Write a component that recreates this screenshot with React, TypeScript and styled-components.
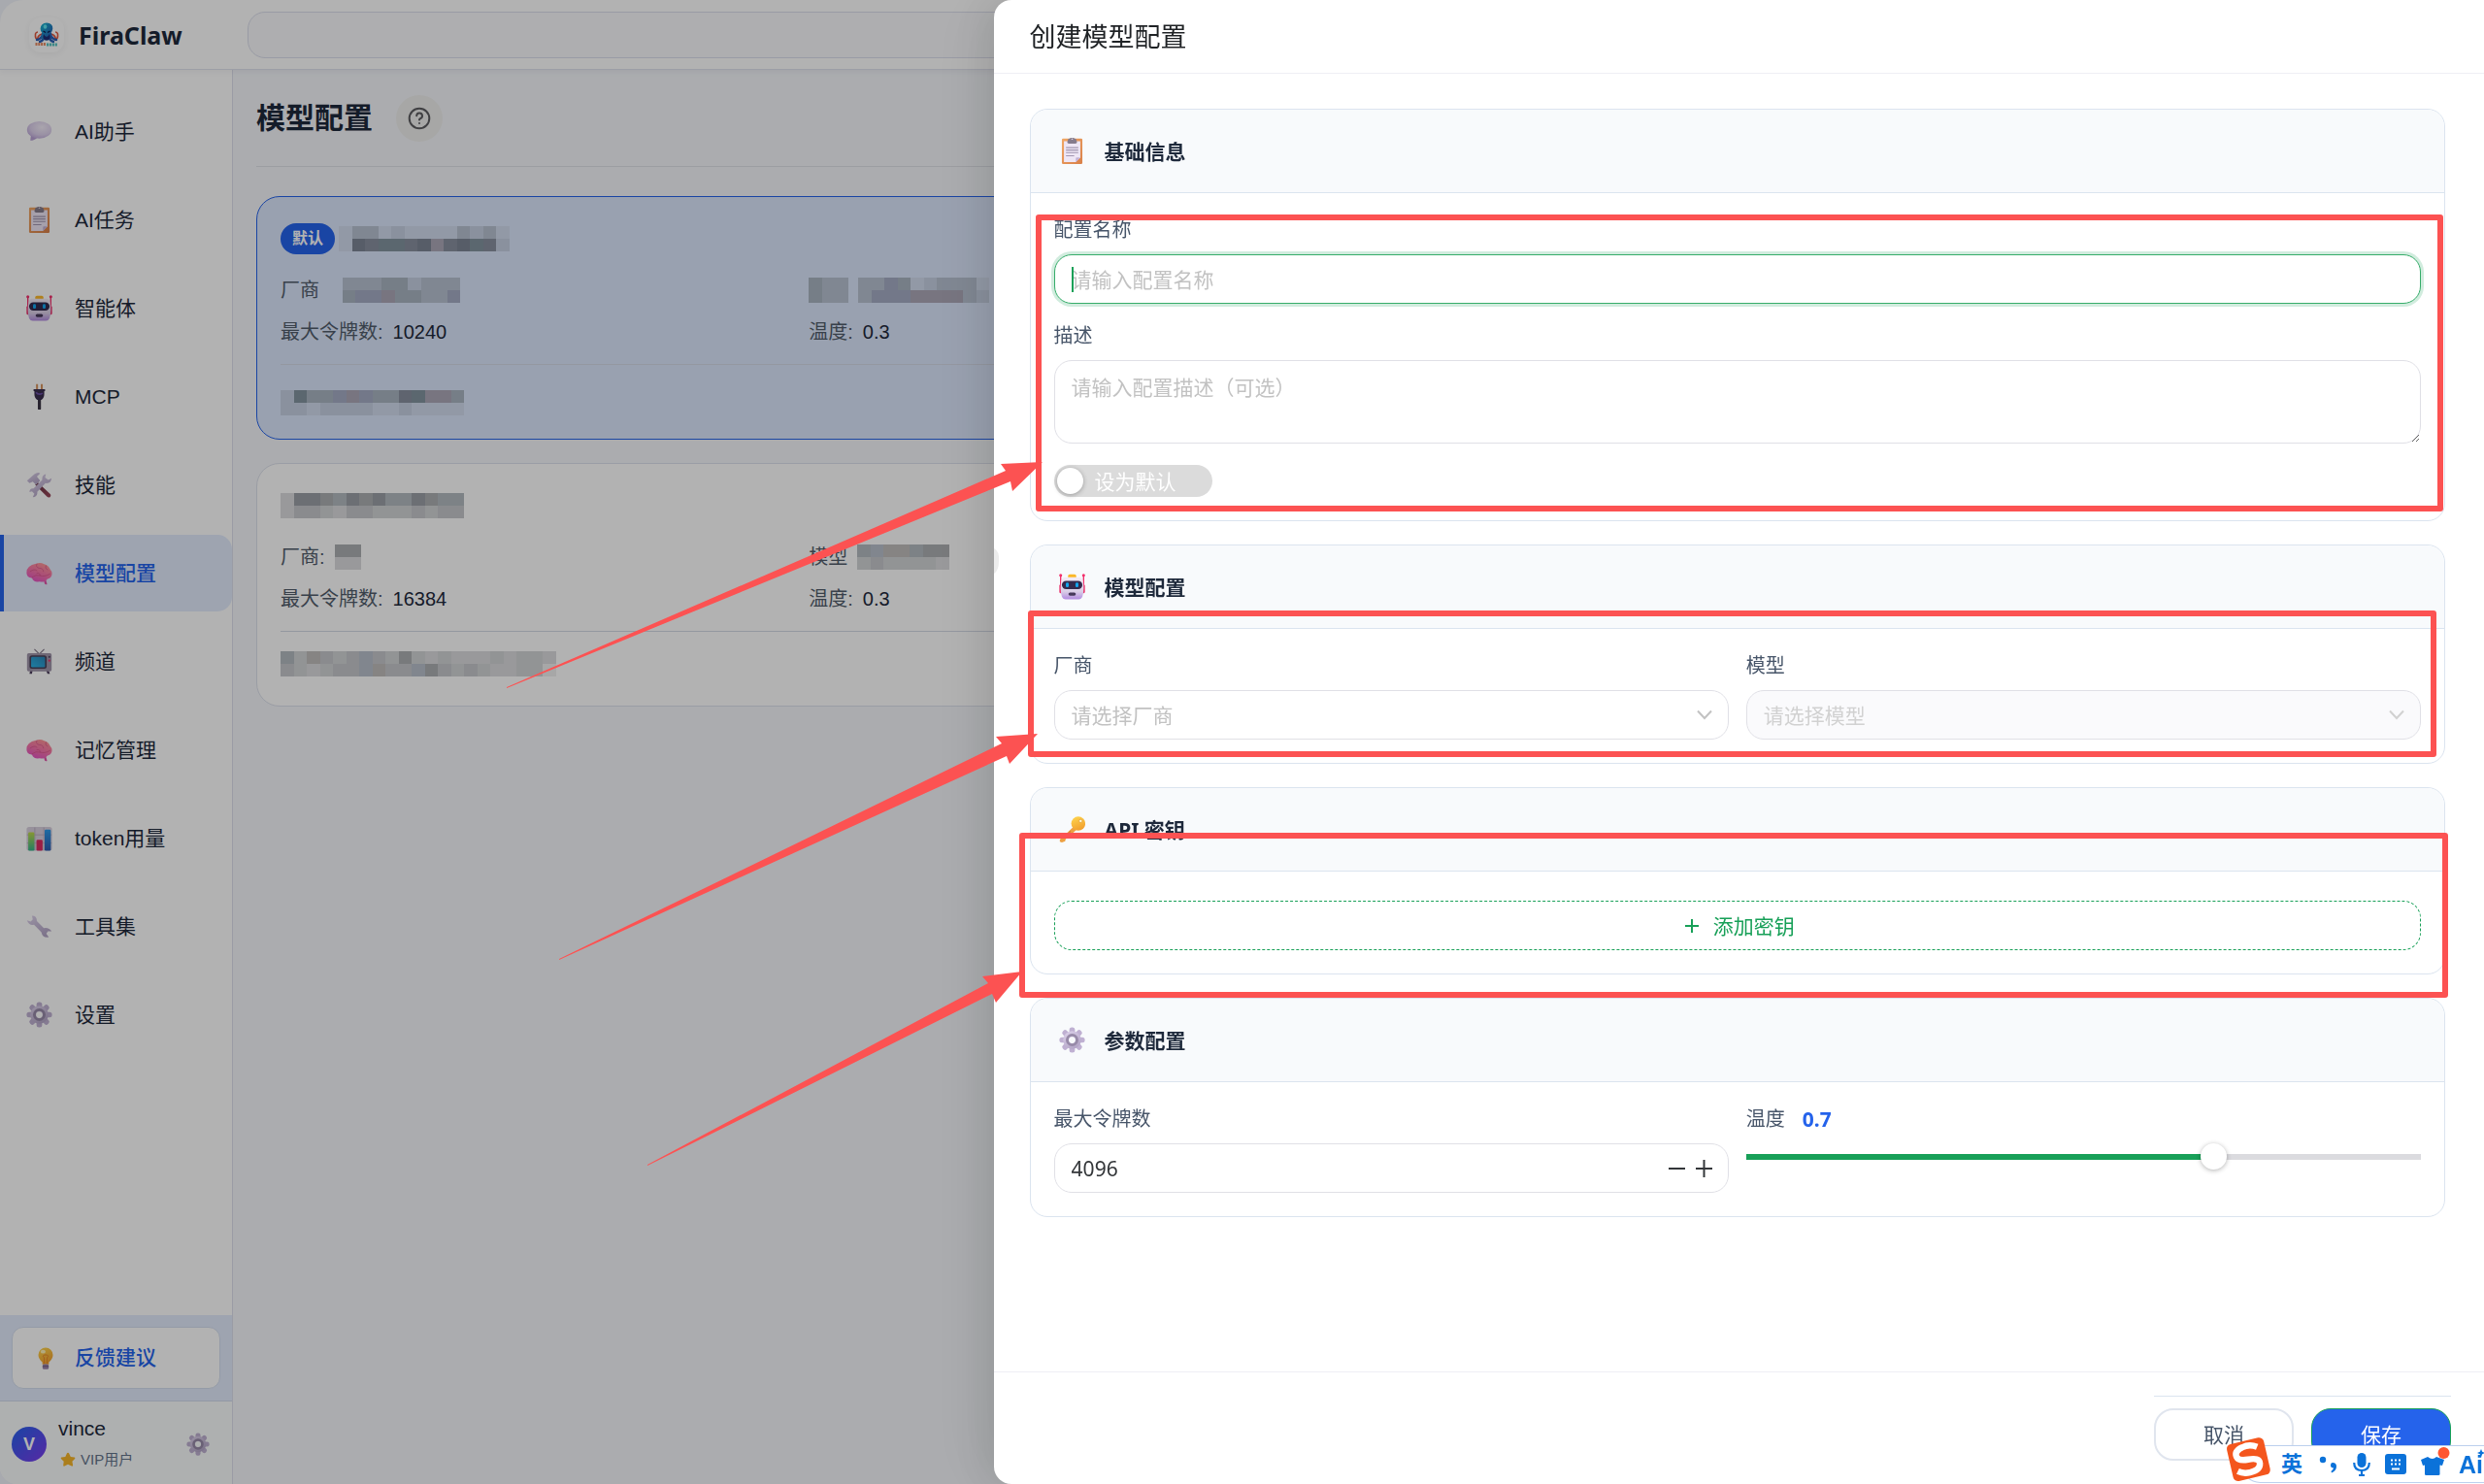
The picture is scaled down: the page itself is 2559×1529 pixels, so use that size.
import React, { useState } from 'react';
import styled, { createGlobalStyle, css } from 'styled-components';

const uiFont = `"Liberation Sans", "Noto Sans CJK SC", sans-serif`;
const formFont = `"Noto Sans", "Noto Sans CJK SC", sans-serif`;

const GlobalStyle = createGlobalStyle`
  *, *::before, *::after { box-sizing: border-box; }
  html, body { margin: 0; height: 100%; overflow: hidden; }
  body {
    background: #f1f4fb;
    color: #1e293b;
    font-family: ${uiFont};
    font-size: 21px;
    line-height: 28px;
  }
  button, input, textarea, select { font: inherit; color: inherit; margin: 0; }
  h1, h2, h3, p, dl, dd, dt, ul { margin: 0; padding: 0; }
`;

/* ---------- Icons ---------- */

const Glyph = styled.svg<{ $size: number }>`
  display: block;
  flex: none;
  width: ${p => p.$size}px;
  height: ${p => p.$size}px;
`;

const HiddenDefs = styled.svg`
  position: absolute;
  width: 0;
  height: 0;
`;

const Gradients = () => (
  <HiddenDefs aria-hidden="true">
    <defs>
      <linearGradient id="lilac" x1="0" y1="0" x2="0.6" y2="1">
        <stop offset="0" stopColor="#ded3ec" />
        <stop offset="1" stopColor="#b3a5c6" />
      </linearGradient>
      <radialGradient id="bubble" cx="0.6" cy="0.35" r="0.75">
        <stop offset="0" stopColor="#f3edf8" />
        <stop offset="0.6" stopColor="#dccfeb" />
        <stop offset="1" stopColor="#b9a2d6" />
      </radialGradient>
      <linearGradient id="board" x1="0" y1="0" x2="1" y2="1">
        <stop offset="0" stopColor="#f0a765" />
        <stop offset="1" stopColor="#d98049" />
      </linearGradient>
      <linearGradient id="brain" x1="0.8" y1="0" x2="0.3" y2="1">
        <stop offset="0" stopColor="#ff9a93" />
        <stop offset="0.5" stopColor="#f777a8" />
        <stop offset="1" stopColor="#e453c4" />
      </linearGradient>
      <linearGradient id="screen" x1="0" y1="1" x2="1" y2="0">
        <stop offset="0" stopColor="#2bb4e8" />
        <stop offset="1" stopColor="#2a86b8" />
      </linearGradient>
      <linearGradient id="head" x1="0" y1="0" x2="0" y2="1">
        <stop offset="0" stopColor="#f4edf8" />
        <stop offset="0.65" stopColor="#d9cde6" />
        <stop offset="1" stopColor="#b18ae0" />
      </linearGradient>
      <linearGradient id="gold" x1="0" y1="0" x2="0.4" y2="1">
        <stop offset="0" stopColor="#ffd84f" />
        <stop offset="1" stopColor="#f2a12f" />
      </linearGradient>
      <linearGradient id="barGreen" x1="0" y1="0" x2="0" y2="1">
        <stop offset="0" stopColor="#bfd84a" />
        <stop offset="1" stopColor="#35b58c" />
      </linearGradient>
      <linearGradient id="barBlue" x1="0" y1="0" x2="0" y2="1">
        <stop offset="0" stopColor="#2c9bea" />
        <stop offset="1" stopColor="#2c5cb0" />
      </linearGradient>
      <linearGradient id="handle" x1="0" y1="0" x2="1" y2="1">
        <stop offset="0" stopColor="#5b2f3f" />
        <stop offset="1" stopColor="#a04a5c" />
      </linearGradient>
      <linearGradient id="sea" x1="0" y1="0" x2="1" y2="1">
        <stop offset="0" stopColor="#12b8cf" />
        <stop offset="1" stopColor="#2b4fb0" />
      </linearGradient>
    </defs>
  </HiddenDefs>
);

type IconName =
  | 'chat' | 'clipboard' | 'robot' | 'plug' | 'tools' | 'brain' | 'tv'
  | 'chart' | 'wrench' | 'gear' | 'bulb' | 'star' | 'key';

const teeth = [0, 45, 90, 135, 180, 225, 270, 315];

const drawings: Record<IconName, React.ReactNode> = {
  chat: (
    <>
      <path d="M6 19 L5 27 Q10 27 14 23 Z" fill="#b9a2d6" />
      <ellipse cx="16" cy="14" rx="15" ry="10.5" fill="url(#bubble)" />
    </>
  ),
  clipboard: (
    <>
      <rect x="3.5" y="1" width="25" height="31" rx="1.5" fill="url(#board)" />
      <path d="M6 4 H26 V24 L20.5 29.5 H6 Z" fill="#eee6f5" />
      <path d="M26 24 L20.5 29.5 V25 Q20.5 24 21.5 24 Z" fill="#c3b2d6" />
      <path d="M11 2.5 Q11 1 13 1 Q16 -1.5 19 1 Q21 1 21 2.5 L22 5 Q22 7 20 7 H12 Q10 7 10 5 Z" fill="#857b8c" />
      <circle cx="16" cy="1.5" r="1" fill="#d8d0de" />
      <path d="M8.5 12 H23.5 M8.5 15 H23.5 M8.5 18 H23.5 M8.5 22 H18.5" stroke="#a195b0" strokeWidth="1.3" />
    </>
  ),
  robot: (
    <>
      <path d="M2 2 V16 M30 2 V16" stroke="#f2306c" strokeWidth="1.6" />
      <circle cx="2" cy="2" r="1.8" fill="#f2306c" />
      <circle cx="30" cy="2" r="1.8" fill="#f2306c" />
      <rect x="0.4" y="13" width="4" height="11" rx="1.8" fill="#e8316b" />
      <rect x="27.6" y="13" width="4" height="11" rx="1.8" fill="#e8316b" />
      <rect x="11" y="1" width="10" height="5" rx="2" fill="#fbb829" />
      <path d="M6 4.5 H26 Q30 6 30 18 Q30 31.5 24 31.5 H8 Q2 31.5 2 18 Q2 6 6 4.5 Z" fill="url(#head)" />
      <rect x="3.5" y="9" width="25" height="10" rx="5" fill="#332a4c" />
      <rect x="8.3" y="11" width="3.6" height="5.6" rx="1.6" fill="#14a5ec" />
      <rect x="20.1" y="11" width="3.6" height="5.6" rx="1.6" fill="#14a5ec" />
      <rect x="11.5" y="23" width="9" height="4" rx="2" fill="#46385a" />
    </>
  ),
  plug: (
    <>
      <path d="M13.2 1 V8 M19 1 V8" stroke="#d89661" strokeWidth="2.4" />
      <rect x="14.2" y="18" width="3.8" height="14" rx="1" fill="#3c3546" />
      <path d="M9 7 H23 V9.5 H22 V13 Q22 18 18.5 20 H13.5 Q10 18 10 13 V9.5 H9 Z" fill="#3b2e50" />
      <path d="M12 11 Q15 15 20 12" stroke="#6d4fa8" strokeWidth="2" fill="none" />
    </>
  ),
  tools: (
    <>
      <path d="M14 13 L29 27 Q31 29 29 31 Q27 32 25.5 30.5 L11 16 Z" fill="url(#handle)" />
      <path d="M1 11 L10 3 Q14 0 17 2 L13 6 L17 11 L12 16 L8 12 L4 14 Z" fill="url(#lilac)" />
      <path d="M24 3 Q19 4 19.5 10 L9 20.5 Q4 20 4 25 L7 24 L10 27 L8 31 Q14 31 13.5 24.5 L23.5 14 Q30 15 31 8 L27 10 L23 7 Z" fill="url(#lilac)" />
    </>
  ),
  brain: (
    <>
      <path d="M21 23 L24 24 L25.5 29.5 Q24 30.5 22.5 29 Z" fill="#e052a8" />
      <path d="M12 4.5 Q17 2.5 22 5 Q27 6 29 11 Q32.5 15 31 19 Q30 22.5 26 23 Q23 27.5 16 26.5 Q9 27.5 7 22 Q0 21.5 0.5 15 Q0.5 7 12 4.5 Z" fill="url(#brain)" />
      <path d="M5 14 Q10 10 13 13 M13 5 Q11 9 16 10 Q21 10 21 14 M24 7 Q22 10 26 12 M7 21 Q12 17 17 19 Q22 21 29 17 M17 19 Q17 15 13 16" fill="none" stroke="#d9568c" strokeWidth="0.9" strokeLinecap="round" />
    </>
  ),
  tv: (
    <>
      <path d="M10 1 L16 7 L22 1" stroke="#857b8c" strokeWidth="1.4" fill="none" />
      <path d="M5 26 L8 26 L7 31 L4 31 Z M24 26 H27 L29 31 H26 Z" fill="#4b3d5c" />
      <rect x="1" y="6" width="30" height="22" rx="2" fill="#a095aa" />
      <rect x="4" y="8.5" width="21" height="16.5" rx="3" fill="#4a4158" />
      <rect x="6" y="10.5" width="17" height="12.5" rx="1.5" fill="url(#screen)" />
      <circle cx="28.2" cy="10.5" r="1.3" fill="#574b66" />
      <circle cx="28.2" cy="15" r="1.3" fill="#f2306c" />
    </>
  ),
  chart: (
    <>
      <rect x="0.5" y="2.5" width="31" height="29" rx="3" fill="#d8d0de" />
      <path d="M10.5 3 V31 M21.5 3 V31 M1 12 H31 M1 22 H31" stroke="#b5aabf" strokeWidth="1" />
      <rect x="2.5" y="9" width="7.5" height="22.5" rx="1.5" fill="url(#barGreen)" />
      <rect x="12.5" y="18" width="7.5" height="13.5" rx="1.5" fill="#dd2a62" />
      <rect x="22.5" y="5.5" width="7.5" height="26" rx="1.5" fill="url(#barBlue)" />
    </>
  ),
  wrench: (
    <path
      d="M7 3 Q13 3 13 9.5 L21.5 18 Q28 17 31 22 L26.5 22 L24.5 25 L27.5 29 Q20 30.5 18.5 23 L9.5 14 Q3 15 1 8.5 L5.5 10 L8 7.5 Z"
      fill="url(#lilac)"
    />
  ),
  gear: (
    <>
      {teeth.map(a => (
        <rect key={a} x="12.6" y="0.5" width="6.8" height="9" rx="3" fill="#bfb0d2" transform={`rotate(${a} 16 16)`} />
      ))}
      <path fillRule="evenodd" d="M16 5 A11 11 0 1 0 16 27 A11 11 0 1 0 16 5 Z M16 12 A4 4 0 1 1 16 20 A4 4 0 1 1 16 12 Z" fill="url(#lilac)" />
      <circle cx="16" cy="16" r="6" fill="none" stroke="#978aa8" strokeWidth="3.4" />
    </>
  ),
  bulb: (
    <>
      <path d="M16 2 A10 10 0 0 1 26 12 Q26 17 20.5 22 V25 H11.5 V22 Q6 17 6 12 A10 10 0 0 1 16 2 Z" fill="url(#gold)" />
      <ellipse cx="12.5" cy="7.5" rx="3.4" ry="2.6" fill="#fff2b8" />
      <path d="M14 24 V16 Q11 13 14 12 H18 Q21 13 18 16 V24" fill="none" stroke="#e8872b" strokeWidth="1.3" />
      <rect x="11.8" y="24.5" width="8.4" height="7" rx="2" fill="#9a83ad" />
      <path d="M11.8 27.6 H20.2" stroke="#6b5a7c" strokeWidth="1.1" />
    </>
  ),
  star: (
    <path
      d="M16 1.5 Q17.5 1.5 18.3 3.2 L21.6 10.2 L29.3 11.2 Q32 11.8 30.2 14 L24.8 19.4 L26.2 27.2 Q26.2 30 23.6 29 L16 25.4 L9 29 Q6 30 6.4 27.2 L7.4 19.4 L1.8 14 Q0.4 11.8 2.8 11.2 L10.6 10.2 L13.8 3.2 Q14.6 1.5 16 1.5 Z"
      fill="#f5b52a"
    />
  ),
  key: (
    <>
      <path d="M17.5 13 L21 17 L8 28 L7.5 30.5 L3.5 32 L1 31 L1 28.5 Z" fill="#eda042" />
      <path d="M14 18 L10 24 L12 25" fill="none" stroke="#d98630" strokeWidth="1.6" />
      <circle cx="23.5" cy="9" r="8.6" fill="url(#gold)" />
      <circle cx="26.4" cy="5.8" r="2" fill="#fff5d0" stroke="#e0992e" strokeWidth="0.8" />
    </>
  ),
};

const Icon = ({ name, size = 27 }: { name: IconName; size?: number }) => (
  <Glyph $size={size} viewBox="0 0 32 32" aria-hidden="true">{drawings[name]}</Glyph>
);

const OctopusLogo = () => (
  <Glyph $size={26} viewBox="0 0 26 26" aria-hidden="true">
    <path d="M8 12 Q3 14 4 18 Q1 17 1.5 12 Q2 10 4 10 M18 12 Q23 14 22 18 Q25 17 24.5 12 Q24 10 22 10" fill="none" stroke="#e0563c" strokeWidth="1.6" />
    <path d="M9 12 Q8 17 3 18 M11 13 Q10 19 6 20 M17 12 Q18 17 23 18 M15 13 Q16 19 20 20" fill="none" stroke="#2a5fb5" strokeWidth="2.4" strokeLinecap="round" />
    <path d="M13 0.5 Q19.5 1 19.3 6.5 Q19 9 17.5 11 L18.5 16 Q16 19 13 18.5 Q10 19 7.5 16 L8.5 11 Q6.5 9 6.6 6.5 Q7 1 13 0.5 Z" fill="url(#sea)" />
    <path d="M10 12 Q13 18 16 12 Q18 18 13 18.5 Q8 18 10 12 Z" fill="#1d2f78" />
    <path d="M9.5 9 L12 10.5 M16.5 9 L14 10.5" stroke="#0d1d4e" strokeWidth="1.4" />
    <ellipse cx="11.5" cy="4.5" rx="1.8" ry="2.2" fill="#5fe3ee" />
    <path d="M1.5 22.5 H12" stroke="#e58a63" strokeWidth="3" strokeDasharray="2 0.8" />
    <path d="M13 23 H24.5" stroke="#55c3c0" strokeWidth="3" strokeDasharray="2.2 0.7" />
  </Glyph>
);

/* ---------- Application frame ---------- */

const Shell = styled.div`
  display: flex;
  flex-direction: column;
  height: 100vh;
  overflow: hidden;
  border-radius: 24px 0 0 18px;
  background: #f5f7fb;
`;

const TopBar = styled.header`
  display: flex;
  flex: none;
  align-items: center;
  height: 72px;
  padding: 0 36px 0 30px;
  background: #ffffff;
  border-bottom: 1px solid #e0e2ee;
  box-shadow: 0 2px 6px rgba(30, 41, 80, 0.06);
  z-index: 1;
`;

const Brand = styled.div`
  display: flex;
  flex: none;
  align-items: center;
  gap: 15px;
  width: 225px;
  font-family: ${formFont};
  font-size: 25px;
  font-weight: 700;
  color: #1e293b;
`;

const BrandMark = styled.span`
  display: grid;
  place-items: center;
  width: 36px;
  height: 36px;
  border-radius: 12px;
  background: #ffffff;
  box-shadow: 0 2px 6px rgba(30, 41, 59, 0.06);
`;

const SearchInput = styled.input`
  flex: 1;
  min-width: 0;
  height: 48px;
  padding: 0 24px;
  border: 1px solid #dcdeec;
  border-radius: 18px;
  background: #f9fafc;
  outline: none;
`;

const Workspace = styled.div`
  display: flex;
  flex: 1;
  min-height: 0;
`;

const Sidebar = styled.aside`
  display: flex;
  flex: none;
  flex-direction: column;
  width: 240px;
  background: #ffffff;
  border-right: 1px solid #dde0ec;
`;

const NavList = styled.nav`
  display: flex;
  flex: 1;
  flex-direction: column;
  gap: 12px;
  padding-top: 24px;
`;

const NavLink = styled.a<{ $active?: boolean }>`
  display: flex;
  flex: none;
  align-items: center;
  gap: 23px;
  height: 79px;
  padding-left: 23px;
  border-left: 4px solid transparent;
  color: #1e293b;
  text-decoration: none;
  ${p => p.$active && css`
    border-left-color: #2563eb;
    border-radius: 0 15px 15px 0;
    background: #e2ebfd;
    color: #2563eb;
    font-weight: 500;
  `}
`;

const FeedbackArea = styled.div`
  padding: 12px;
  background: #e2ebfd;
  border-bottom: 1px solid #d3dcec;
`;

const FeedbackButton = styled.button`
  display: flex;
  align-items: center;
  gap: 18px;
  width: 100%;
  height: 64px;
  padding: 0 22px;
  border: 1px solid #d5dff0;
  border-radius: 12px;
  background: #ffffff;
  color: #2563eb;
  font-weight: 500;
`;

const UserRow = styled.div`
  display: flex;
  align-items: center;
  gap: 12px;
  height: 85px;
  padding: 2px 23px 0 12px;
  background: #fafcfc;
`;

const Avatar = styled.span`
  display: grid;
  place-items: center;
  flex: none;
  width: 36px;
  height: 36px;
  border-radius: 50%;
  background: linear-gradient(135deg, #2563eb, #7c3aed);
  color: #ffffff;
  font-size: 18px;
  font-weight: 700;
`;

const UserText = styled.div`
  flex: 1;
`;

const UserLevel = styled.div`
  display: flex;
  align-items: center;
  gap: 5px;
  margin-top: 4px;
  padding-left: 2px;
  color: #64748b;
  font-size: 15px;
`;

const IconButton = styled.button`
  display: grid;
  place-items: center;
  padding: 0;
  border: 0;
  background: none;
`;

/* ---------- Configuration list ---------- */

const Main = styled.main`
  flex: 1;
  min-width: 0;
  padding: 24px;
`;

const PageHeader = styled.div`
  display: flex;
  align-items: center;
  gap: 24px;
  height: 76px;
  padding-bottom: 24px;
  border-bottom: 1px solid #dfe1e8;

  h1 {
    font-size: 30px;
    line-height: 40px;
    color: #1e293b;
  }
`;

const HelpButton = styled.button`
  display: grid;
  place-items: center;
  width: 48px;
  height: 48px;
  padding: 0;
  border: 0;
  border-radius: 50%;
  background: #f0f0ee;
  color: #5c5c60;
`;

const ConfigGrid = styled.div`
  display: grid;
  grid-template-columns: 1fr 1fr;
  gap: 24px;
  padding-top: 30px;
`;

const ConfigCard = styled.article<{ $selected?: boolean }>`
  grid-column: 1;
  height: 251px;
  padding: 24px;
  border: 1px solid ${p => (p.$selected ? '#2563eb' : '#dde1ec')};
  border-radius: 24px;
  background: ${p => (p.$selected ? '#dce7fc' : '#ffffff')};
`;

const CardTitle = styled.div`
  display: flex;
  align-items: center;
  gap: 4px;
  height: 38px;
`;

const Badge = styled.span`
  padding: 0 12px;
  border-radius: 16px;
  background: #2563eb;
  color: #ffffff;
  font-size: 16px;
  font-weight: 700;
  line-height: 32px;
`;

const Facts = styled.dl`
  display: grid;
  grid-template-columns: 1fr 1fr;
  gap: 15px;
  padding: 20px 0 19px;
  border-bottom: 1px solid #d5dae6;
  font-size: 20px;

  div {
    display: flex;
    align-items: center;
    height: 28px;
    gap: 10px;
  }
  dt { color: #515c6b; }
  dd { color: #1e293b; }
`;

const CardNote = styled.div<{ $loose?: boolean }>`
  padding-top: ${p => (p.$loose ? '26px' : '20px')};
`;

const Redacted = styled.svg`
  display: block;
  flex: none;
`;

type MosaicProps = { rows: string[]; palette: Record<string, string> };

/* Pixelated block that hides private values: one letter per tile, a dot leaves a gap. */
const Mosaic = ({ rows, palette }: MosaicProps) => {
  const w = 13.5;
  const h = 13;
  const cols = Math.max(...rows.map(r => r.length));
  return (
    <Redacted width={Math.ceil(cols * w)} height={rows.length * h} aria-hidden="true" shapeRendering="crispEdges">
      {rows.flatMap((row, y) =>
        row.split('').map((c, x) =>
          palette[c] ? <rect key={`${x}-${y}`} x={x * w} y={y * h} width={w + 0.5} height={h} fill={palette[c]} /> : null,
        ),
      )}
    </Redacted>
  );
};

const blueTiles = {
  a: '#d2dcee', b: '#b8c2d2', c: '#7d8696', d: '#8890a0', e: '#8394a0',
  f: '#a9b5c2', g: '#c6d0e2', h: '#a5adc4', i: '#aca8b8',
};
const greyTiles = {
  a: '#efefef', b: '#dcdcde', c: '#9b9fa6', d: '#adafb2', e: '#b4bbc0',
  f: '#c6c8cc', g: '#d2d4d6', h: '#c0bdbc', i: '#b9c0cc',
};

/* ---------- Drawer ---------- */

const Mask = styled.div`
  position: fixed;
  inset: 0;
  background: rgba(0, 0, 0, 0.3);
  z-index: 2;
`;

const Drawer = styled.section`
  position: fixed;
  inset: 0 0 0 auto;
  display: flex;
  flex-direction: column;
  width: 60%;
  border-radius: 18px 0 0 18px;
  background: #ffffff;
  box-shadow: -9px 0 42px rgba(0, 0, 0, 0.1), -18px 0 72px rgba(0, 0, 0, 0.05);
  font-family: ${formFont};
  z-index: 3;
`;

const DrawerHeader = styled.header`
  flex: none;
  padding: 20px 37px 19px;
  border-bottom: 1px solid #efeff5;

  h2 {
    font-size: 27px;
    font-weight: 400;
    line-height: 36px;
    color: #1f2225;
  }
`;

const DrawerBody = styled.form`
  display: flex;
  flex: 1;
  flex-direction: column;
  gap: 24px;
  min-height: 0;
  padding: 36px 40px 36px 37px;
`;

const Section = styled.fieldset`
  flex: none;
  min-width: 0;
  margin: 0;
  padding: 0;
  border: 1px solid #dbe4ef;
  border-radius: 18px;
  overflow: hidden;
`;

const SectionHeader = styled.div`
  display: flex;
  align-items: center;
  gap: 20px;
  height: 86px;
  padding: 0 29px;
  border-bottom: 1px solid #dbe4ef;
  background: #f8fafc;

  h3 {
    font-size: 21px;
    font-weight: 700;
    line-height: 28px;
    color: #1e293b;
  }
`;

const SectionBody = styled.div<{ $columns?: boolean; $compact?: boolean }>`
  display: grid;
  grid-template-columns: ${p => (p.$columns ? '1fr 1fr' : '1fr')};
  gap: 19px 18px;
  padding: ${p => (p.$compact ? '30px' : '24px')} 24px 24px;
`;

const Field = styled.div`
  display: flex;
  flex-direction: column;
  min-width: 0;
`;

const FieldLabel = styled.label`
  display: flex;
  gap: 18px;
  height: 39px;
  font-size: 20px;
  line-height: 28px;
  color: #475569;

  output {
    color: #2563eb;
    font-size: 21px;
    font-weight: 700;
  }
`;

const controlBox = css`
  width: 100%;
  height: 51px;
  border: 1px solid #e0e0e6;
  border-radius: 18px;
  background-color: #ffffff;
`;

const Overlaid = styled.div`
  position: relative;
  display: flex;
`;

const TextInput = styled.input`
  ${controlBox}
  padding: 0 17px;
  border-color: #36ad6a;
  outline: none;
  box-shadow: 0 0 0 3px rgba(24, 160, 88, 0.2);
  caret-color: transparent;

  &::placeholder { color: #c2c2c2; opacity: 1; }
`;

const Caret = styled.span`
  position: absolute;
  top: 13px;
  left: 18px;
  width: 2px;
  height: 26px;
  background: #18a058;
`;

const TextArea = styled.textarea`
  ${controlBox}
  display: block;
  height: 86px;
  padding: 12px 17px;
  line-height: 30px;
  resize: vertical;
  outline: none;

  &::placeholder { color: #c2c2c2; opacity: 1; }
`;

const SwitchLabel = styled.label`
  display: flex;
  align-items: center;
  justify-self: start;
  gap: 12px;
  height: 33px;
  margin-top: 3px;
  padding: 0 37px 0 3px;
  border-radius: 17px;
  background: #dbdbdb;
  color: #ffffff;

  input {
    appearance: none;
    width: 27px;
    height: 27px;
    margin: 0;
    border-radius: 50%;
    background: #ffffff;
    box-shadow: 0 1px 5px rgba(0, 0, 0, 0.3);
  }
`;

const Select = styled.select`
  ${controlBox}
  appearance: none;
  padding: 0 54px 0 17px;
  color: #c2c2c2;
  outline: none;

  &:disabled {
    background-color: #fafafc;
    color: #d1d1d1;
    opacity: 1;
  }
`;

const Chevron = styled.svg<{ $muted?: boolean }>`
  position: absolute;
  top: 20px;
  right: 17px;
  width: 16px;
  height: 11px;
  fill: none;
  stroke: ${p => (p.$muted ? '#d1d1d1' : '#c2c2c2')};
  stroke-width: 2;
  pointer-events: none;
`;

const AddButton = styled.button`
  display: flex;
  align-items: center;
  justify-content: center;
  gap: 14px;
  height: 51px;
  padding: 0 6px 0 10px;
  border: 1px dashed #18a058;
  border-radius: 18px;
  background: transparent;
  color: #18a058;
`;

const NumberBox = styled.div`
  ${controlBox}
  display: flex;
  align-items: center;
  gap: 11px;
  padding: 0 16px 0 17px;

  input {
    flex: 1;
    min-width: 0;
    padding: 0;
    border: 0;
    outline: none;
    color: #333639;
  }
`;

const StepButton = styled.button`
  display: grid;
  place-items: center;
  padding: 0;
  border: 0;
  background: none;
  color: #333639;
`;

const Slider = styled.input<{ $fill: string }>`
  appearance: none;
  width: 100%;
  height: 27px;
  margin: 0;
  background: linear-gradient(to right, #18a058 ${p => p.$fill}, #dbdbdf ${p => p.$fill}) center / 100% 6px no-repeat;
  border-radius: 3px;

  &::-webkit-slider-thumb {
    appearance: none;
    width: 27px;
    height: 27px;
    border-radius: 50%;
    background: #ffffff;
    box-shadow: 0 1px 5px rgba(0, 0, 0, 0.3);
  }
`;

const DrawerFooter = styled.footer`
  display: flex;
  flex: none;
  justify-content: flex-end;
  padding: 24px 34px;
  border-top: 1px solid #efeff5;
`;

const Actions = styled.div`
  display: flex;
  gap: 18px;
  padding-top: 12px;
  border-top: 1px solid #dbe4ef;
`;

const ActionButton = styled.button<{ $primary?: boolean }>`
  width: 144px;
  height: 54px;
  border: ${p => (p.$primary ? '1px solid #18a058' : '2px solid #e0e5ee')};
  border-radius: 20px;
  background: ${p => (p.$primary ? '#2563eb' : '#ffffff')};
  color: ${p => (p.$primary ? '#ffffff' : '#475569')};
`;

/* ---------- Overlays ---------- */

const InputMethodBar = styled.div`
  position: fixed;
  right: 0;
  bottom: 1px;
  display: flex;
  align-items: center;
  gap: 15px;
  width: 250px;
  height: 39px;
  padding: 0 0 0 40px;
  border: 1px solid #bcd0ee;
  border-right: 0;
  border-radius: 20px 0 0 20px;
  background: #ffffff;
  color: #0b72d9;
  font-size: 22px;
  font-weight: 700;
  z-index: 5;

  > * { flex: none; overflow: visible; }
`;

const InputMethodLogo = styled.svg`
  position: absolute;
  left: -19px;
  bottom: -1px;
  width: 52px;
  height: 48px;
`;

const Assistant = styled.span`
  position: relative;
  font-size: 25px;

  svg {
    position: absolute;
    top: -2px;
    right: -2px;
  }
`;

const Annotations = styled.svg`
  position: fixed;
  inset: 0;
  width: 100%;
  height: 100%;
  pointer-events: none;
  z-index: 4;
`;

const navItems: { icon: IconName; label: string; active?: boolean }[] = [
  { icon: 'chat', label: 'AI助手' },
  { icon: 'clipboard', label: 'AI任务' },
  { icon: 'robot', label: '智能体' },
  { icon: 'plug', label: 'MCP' },
  { icon: 'tools', label: '技能' },
  { icon: 'brain', label: '模型配置', active: true },
  { icon: 'tv', label: '频道' },
  { icon: 'brain', label: '记忆管理' },
  { icon: 'chart', label: 'token用量' },
  { icon: 'wrench', label: '工具集' },
  { icon: 'gear', label: '设置' },
];

const FormSection = ({ icon, title, columns, compact, children }: {
  icon: IconName; title: string; columns?: boolean; compact?: boolean; children: React.ReactNode;
}) => (
  <Section aria-label={title}>
    <SectionHeader>
      <Icon name={icon} />
      <h3>{title}</h3>
    </SectionHeader>
    <SectionBody $columns={columns} $compact={compact}>{children}</SectionBody>
  </Section>
);

const SelectField = ({ id, label, placeholder, disabled }: {
  id: string; label: string; placeholder: string; disabled?: boolean;
}) => (
  <Field>
    <FieldLabel htmlFor={id}>{label}</FieldLabel>
    <Overlaid>
      <Select id={id} disabled={disabled} defaultValue="">
        <option value="">{placeholder}</option>
      </Select>
      <Chevron viewBox="0 0 16 11" $muted={disabled}><path d="M1 1.5 L8 9 L15 1.5" /></Chevron>
    </Overlaid>
  </Field>
);

const ImeBar = () => (
  <InputMethodBar>
    <InputMethodLogo viewBox="0 0 52 48" aria-hidden="true">
      <g transform="rotate(-13 26 24)">
        <rect x="6" y="4" width="39" height="39" rx="5" fill="#f4561d" />
        <path d="M37 13 Q30 8 22 10 Q13 12 14 18 Q15 23 25 23.5 Q37 24 36 30 Q35 37 24 37 Q17 37 12 33" fill="none" stroke="#fff" strokeWidth="6.4" />
      </g>
    </InputMethodLogo>
    <span>英</span>
    <svg width="22" height="20" viewBox="0 0 22 20" fill="#0b72d9" aria-hidden="true">
      <circle cx="6" cy="5" r="3.2" />
      <path d="M16 8 Q20 8 20 12 Q20 16 15 18.5 L14.5 17 Q17 15 17 13.6 Q14 13.4 14 11 Q14 8 16 8 Z" />
    </svg>
    <svg width="18" height="24" viewBox="0 0 18 24" aria-hidden="true">
      <rect x="4.5" y="0" width="9" height="15" rx="4.5" fill="#0b72d9" />
      <path d="M1.2 10 Q1.2 18 9 18 Q16.8 18 16.8 10" fill="none" stroke="#0b72d9" strokeWidth="2.2" />
      <path d="M9 18 V23 M6 23 H12" stroke="#0b72d9" strokeWidth="2.2" />
    </svg>
    <svg width="22" height="21" viewBox="0 0 22 21" aria-hidden="true">
      <rect width="22" height="21" rx="3" fill="#0b72d9" />
      <path d="M6 6.5 H8 M10 6.5 H12 M14 6.5 H16 M6 10.5 H8 M10 10.5 H12 M14 10.5 H16 M7 15.5 H15" stroke="#fff" strokeWidth="2" />
    </svg>
    <svg width="24" height="30" viewBox="0 0 24 30" aria-hidden="true">
      <path d="M7 7 Q12 11 16 7 L24 10 L22 16 L19.5 15.5 V25 Q19.5 26 18 26 H5.5 Q4 26 4 25 V15.5 L2 16 L0 10 Z" fill="#0b72d9" />
      <circle cx="23.5" cy="3" r="6" fill="#ff5630" />
    </svg>
    <Assistant>
      Ai
      <svg width="8" height="8" viewBox="0 0 8 8" aria-hidden="true">
        <path d="M4 0 L5.2 2.8 L8 4 L5.2 5.2 L4 8 L2.8 5.2 L0 4 L2.8 2.8 Z" fill="#0b72d9" />
      </svg>
    </Assistant>
  </InputMethodBar>
);

export default function App() {
  const [temperature, setTemperature] = useState(0.7);
  const [tokens, setTokens] = useState(4096);

  return (
    <>
      <GlobalStyle />
      <Gradients />
      <Shell>
        <TopBar>
          <Brand><BrandMark><OctopusLogo /></BrandMark>FiraClaw</Brand>
          <SearchInput type="search" aria-label="搜索" />
        </TopBar>
        <Workspace>
          <Sidebar>
            <NavList>
              {navItems.map(item => (
                <NavLink key={item.label} href="#" $active={item.active}>
                  <Icon name={item.icon} />
                  {item.label}
                </NavLink>
              ))}
            </NavList>
            <FeedbackArea>
              <FeedbackButton type="button"><Icon name="bulb" size={24} />反馈建议</FeedbackButton>
            </FeedbackArea>
            <UserRow>
              <Avatar>V</Avatar>
              <UserText>
                <div>vince</div>
                <UserLevel><Icon name="star" size={16} />VIP用户</UserLevel>
              </UserText>
              <IconButton type="button" aria-label="设置"><Icon name="gear" size={24} /></IconButton>
            </UserRow>
          </Sidebar>
          <Main>
            <PageHeader>
              <h1>模型配置</h1>
              <HelpButton type="button" aria-label="帮助">
                <svg width="24" height="24" viewBox="0 0 24 24" fill="none" stroke="currentColor" strokeWidth="2" strokeLinecap="round">
                  <circle cx="12" cy="12" r="10.3" />
                  <path d="M9.2 9.3 A2.9 2.9 0 1 1 12.8 12.2 Q12 12.6 12 13.6 M12 17 V17.1" />
                </svg>
              </HelpButton>
            </PageHeader>
            <ConfigGrid>
              <ConfigCard $selected>
                <CardTitle>
                  <Badge>默认</Badge>
                  <Mosaic palette={blueTiles} rows={['abbagaaaabgba', 'acdeedcidcedg']} />
                </CardTitle>
                <Facts>
                  <div><dt>厂商</dt><dd><Mosaic palette={blueTiles} rows={['.bbbffgbbb', '.fhhiffbbh']} /></dd></div>
                  <div><dt><Mosaic palette={blueTiles} rows={['fbb', 'fbb']} /></dt><dd><Mosaic palette={blueTiles} rows={['bbhfagbbba', 'bhhhiiiibg']} /></dd></div>
                  <div><dt>最大令牌数:</dt><dd>10240</dd></div>
                  <div><dt>温度:</dt><dd>0.3</dd></div>
                </Facts>
                <CardNote $loose><Mosaic palette={blueTiles} rows={['geffhihffdeiif', 'ggaggggaagaaaa']} /></CardNote>
              </ConfigCard>
              <ConfigCard>
                <CardTitle><Mosaic palette={greyTiles} rows={['bccdecdceecdee', 'bffgbffgggfgff']} /></CardTitle>
                <Facts>
                  <div><dt>厂商:</dt><dd><Mosaic palette={greyTiles} rows={['dd', 'bb']} /></dd></div>
                  <div><dt>模型</dt><dd><Mosaic palette={greyTiles} rows={['eihhedd', 'gfggggb']} /></dd></div>
                  <div><dt>最大令牌数:</dt><dd>16384</dd></div>
                  <div><dt>温度:</dt><dd>0.3</dd></div>
                </Facts>
                <CardNote><Mosaic palette={greyTiles} rows={['eghfgfifgdgbgbbbgbggb', 'fgbgffihffidfgfgbbgga']} /></CardNote>
              </ConfigCard>
            </ConfigGrid>
          </Main>
        </Workspace>
      </Shell>

      <Mask />

      <Drawer role="dialog" aria-label="创建模型配置">
        <DrawerHeader><h2>创建模型配置</h2></DrawerHeader>
        <DrawerBody>
          <FormSection icon="clipboard" title="基础信息">
            <Field>
              <FieldLabel htmlFor="name">配置名称</FieldLabel>
              <Overlaid>
                <TextInput id="name" placeholder="请输入配置名称" />
                <Caret aria-hidden="true" />
              </Overlaid>
            </Field>
            <Field>
              <FieldLabel htmlFor="desc">描述</FieldLabel>
              <TextArea id="desc" placeholder="请输入配置描述（可选）" />
            </Field>
            <SwitchLabel><input type="checkbox" role="switch" />设为默认</SwitchLabel>
          </FormSection>

          <FormSection icon="robot" title="模型配置" columns>
            <SelectField id="vendor" label="厂商" placeholder="请选择厂商" />
            <SelectField id="model" label="模型" placeholder="请选择模型" disabled />
          </FormSection>

          <FormSection icon="key" title="API 密钥" compact>
            <AddButton type="button">
              <svg width="16" height="16" viewBox="0 0 16 16" stroke="currentColor" strokeWidth="2" aria-hidden="true">
                <path d="M8 1 V15 M1 8 H15" />
              </svg>
              添加密钥
            </AddButton>
          </FormSection>

          <FormSection icon="gear" title="参数配置" columns>
            <Field>
              <FieldLabel htmlFor="tokens">最大令牌数</FieldLabel>
              <NumberBox>
                <input id="tokens" inputMode="numeric" value={tokens} onChange={e => setTokens(Number(e.target.value) || 0)} />
                <StepButton type="button" aria-label="减少" onClick={() => setTokens(tokens - 1)}>
                  <svg width="17" height="18" viewBox="0 0 17 18" stroke="currentColor" strokeWidth="2"><path d="M0 9 H17" /></svg>
                </StepButton>
                <StepButton type="button" aria-label="增加" onClick={() => setTokens(tokens + 1)}>
                  <svg width="17" height="18" viewBox="0 0 17 18" stroke="currentColor" strokeWidth="2"><path d="M0 9 H17 M8.5 0 V18" /></svg>
                </StepButton>
              </NumberBox>
            </Field>
            <Field>
              <FieldLabel htmlFor="temperature">温度<output>{temperature.toFixed(1)}</output></FieldLabel>
              <Slider
                id="temperature"
                type="range"
                min={0}
                max={1}
                step={0.1}
                value={temperature}
                $fill={`${temperature * 100}%`}
                onChange={e => setTemperature(Number(e.target.value))}
              />
            </Field>
          </FormSection>
        </DrawerBody>
        <DrawerFooter>
          <Actions>
            <ActionButton type="button">取消</ActionButton>
            <ActionButton type="button" $primary>保存</ActionButton>
          </Actions>
        </DrawerFooter>
      </Drawer>

      <Annotations aria-hidden="true">
        <path d="M1024 565 Q1030 568 1029 578 Q1029 588 1024 591 Z" fill="#ececec" />
        <g fill="none" stroke="#fc5252" strokeWidth="6" strokeLinejoin="round">
          <rect x="1070" y="224" width="1444" height="300" />
          <rect x="1062" y="632" width="1445" height="145" />
          <rect x="1053" y="861" width="1466" height="164" />
        </g>
        <g fill="#fc5252">
          <path d="M522 708 L1036 485 L1031 478 L1074 476 L1043 506 L1041 496 L522 709 Z" />
          <path d="M576 988 L1032 766 L1026 759 L1069 756 L1040 787 L1037 779 L576 989 Z" />
          <path d="M667 1200 L1018 1013 L1012 1006 L1053 1001 L1026 1033 L1022 1024 L667 1201 Z" />
        </g>
      </Annotations>
      <ImeBar />
    </>
  );
}
